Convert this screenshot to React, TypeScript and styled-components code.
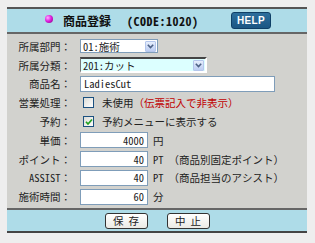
import styled, { createGlobalStyle } from 'styled-components';

const GlobalStyle = createGlobalStyle`
  html, body {
    margin: 0;
    background: #eeeeee;
  }
  body {
    font-family: "Noto Sans Mono CJK JP", "Noto Sans CJK JP", monospace;
    font-size: 10.5px;
    color: #222;
  }
`;

const Panel = styled.div`
  margin: 7px 0 0 7px;
  width: 300px;
`;

const Header = styled.div`
  height: 23px;
  background: #aedce8;
  border-top: 2px solid #555;
  border-bottom: 2px solid #666;
  display: flex;
  align-items: center;
  padding: 0 36px 0 38px;
`;

const Bullet = styled.span`
  width: 8px;
  height: 8px;
  border-radius: 50%;
  margin-top: -3px;
  background: radial-gradient(circle at 35% 35%, #ffb0ff 0%, #e020e0 45%, #80007a 100%);
`;

const Title = styled.span`
  margin-left: 10px;
  font-weight: 700;
  font-size: 12px;
  color: #111;
`;

const Code = styled.span`
  margin-left: 16px;
  font-weight: 700;
  font-size: 12px;
  letter-spacing: 0.5px;
  color: #111;
`;

const HelpButton = styled.span`
  margin-left: auto;
  width: 40px;
  height: 17px;
  box-sizing: border-box;
  border: 1px solid #0f3f66;
  border-radius: 3px;
  background: linear-gradient(#2d6e9c, #1b5683);
  color: #fff;
  font-family: "Liberation Sans", Arial, sans-serif;
  font-weight: 700;
  font-size: 10px;
  display: flex;
  align-items: center;
  justify-content: center;
  letter-spacing: 0.3px;
`;

const Body = styled.div`
  background: #d2d2ce;
  padding: 3px 0 2px;
  display: grid;
  grid-template-columns: 64px 1fr;
  column-gap: 9px;
  grid-auto-rows: 18.8px;
  align-items: center;
`;

const Label = styled.div`
  text-align: right;
  white-space: nowrap;
`;

const Field = styled.div`
  display: flex;
  align-items: center;
  white-space: nowrap;
`;

const SelectBox = styled.div<{ $w: number; $inset?: boolean }>`
  width: ${(p) => p.$w}px;
  height: ${(p) => (p.$inset ? 16 : 14)}px;
  box-sizing: border-box;
  display: flex;
  align-items: center;
  padding: 0 1px 0 2px;
  background: ${(p) => (p.$inset ? '#dcffff' : '#fff')};
  ${(p) =>
    p.$inset
      ? `border-top: 2px solid #444;
         border-left: 1px solid #777;
         border-right: 2px solid #fff;
         border-bottom: 2px solid #fff;`
      : `border: 1px solid #7f9db9;`}
`;

const SelectText = styled.span`
  flex: 1;
`;

const Arrow = styled.span`
  width: 11px;
  height: 11px;
  box-sizing: border-box;
  border: 1px solid #b4c6ec;
  border-radius: 1px;
  background: linear-gradient(#e6eefc, #bccdf2);
  display: flex;
  align-items: center;
  justify-content: center;
`;

const TextBox = styled.div<{ $w: number; $right?: boolean }>`
  width: ${(p) => p.$w}px;
  height: 16px;
  box-sizing: border-box;
  border: 1px solid #7f9db9;
  background: #fff;
  display: flex;
  align-items: center;
  justify-content: ${(p) => (p.$right ? 'flex-end' : 'flex-start')};
  padding: 0 3px;
`;

const Unit = styled.span`
  margin-left: 5px;
`;

const Note = styled.span`
  margin-left: 5px;
`;

const CheckBox = styled.span`
  width: 11px;
  height: 11px;
  box-sizing: border-box;
  margin-left: 3px;
  border: 1px solid #1c5180;
  background: linear-gradient(135deg, #dcdcd7, #fff);
  display: flex;
  align-items: center;
  justify-content: center;
`;

const CheckLabel = styled.span`
  margin-left: 8px;
`;

const Warn = styled.span`
  color: #c00000;
`;

const Footer = styled.div`
  height: 21px;
  background: #aedce8;
  border-top: 2px solid #666;
  border-bottom: 2px solid #444;
  display: flex;
  align-items: center;
  justify-content: center;
  gap: 19px;
`;

const FooterButton = styled.span`
  width: 43px;
  height: 16px;
  box-sizing: border-box;
  border: 1px solid #333;
  border-radius: 3px;
  background: linear-gradient(#ffffff, #ebeae5);
  display: flex;
  align-items: center;
  justify-content: center;
  white-space: pre;
`;

const Chevron = () => (
  <svg width="7" height="5" viewBox="0 0 7 5">
    <path d="M0.8 0.8 L3.5 3.5 L6.2 0.8" fill="none" stroke="#4d6185" strokeWidth="1.6" />
  </svg>
);

const Tick = () => (
  <svg width="8" height="8" viewBox="0 0 8 8">
    <path d="M1 3.8 L3 6 L7 1.5" fill="none" stroke="#21a121" strokeWidth="1.7" />
  </svg>
);

export default function App() {
  return (
    <>
      <GlobalStyle />
      <Panel>
        <Header>
          <Bullet />
          <Title>商品登録</Title>
          <Code>(CODE:1020)</Code>
          <HelpButton>HELP</HelpButton>
        </Header>
        <Body>
          <Label>所属部門：</Label>
          <Field>
            <SelectBox $w={78}>
              <SelectText>01:施術</SelectText>
              <Arrow>
                <Chevron />
              </Arrow>
            </SelectBox>
          </Field>

          <Label>所属分類：</Label>
          <Field>
            <SelectBox $w={127} $inset>
              <SelectText>201:カット</SelectText>
              <Arrow>
                <Chevron />
              </Arrow>
            </SelectBox>
          </Field>

          <Label>商品名：</Label>
          <Field>
            <TextBox $w={195}>LadiesCut</TextBox>
          </Field>

          <Label>営業処理：</Label>
          <Field>
            <CheckBox />
            <CheckLabel>未使用</CheckLabel>
            <Warn>（伝票記入で非表示）</Warn>
          </Field>

          <Label>予約：</Label>
          <Field>
            <CheckBox>
              <Tick />
            </CheckBox>
            <CheckLabel>予約メニューに表示する</CheckLabel>
          </Field>

          <Label>単価：</Label>
          <Field>
            <TextBox $w={68} $right>
              4000
            </TextBox>
            <Unit>円</Unit>
          </Field>

          <Label>ポイント：</Label>
          <Field>
            <TextBox $w={68} $right>
              40
            </TextBox>
            <Unit>PT</Unit>
            <Note>（商品別固定ポイント）</Note>
          </Field>

          <Label>ASSIST：</Label>
          <Field>
            <TextBox $w={68} $right>
              40
            </TextBox>
            <Unit>PT</Unit>
            <Note>（商品担当のアシスト）</Note>
          </Field>

          <Label>施術時間：</Label>
          <Field>
            <TextBox $w={68} $right>
              60
            </TextBox>
            <Unit>分</Unit>
          </Field>
        </Body>
        <Footer>
          <FooterButton>保 存</FooterButton>
          <FooterButton>中 止</FooterButton>
        </Footer>
      </Panel>
    </>
  );
}
